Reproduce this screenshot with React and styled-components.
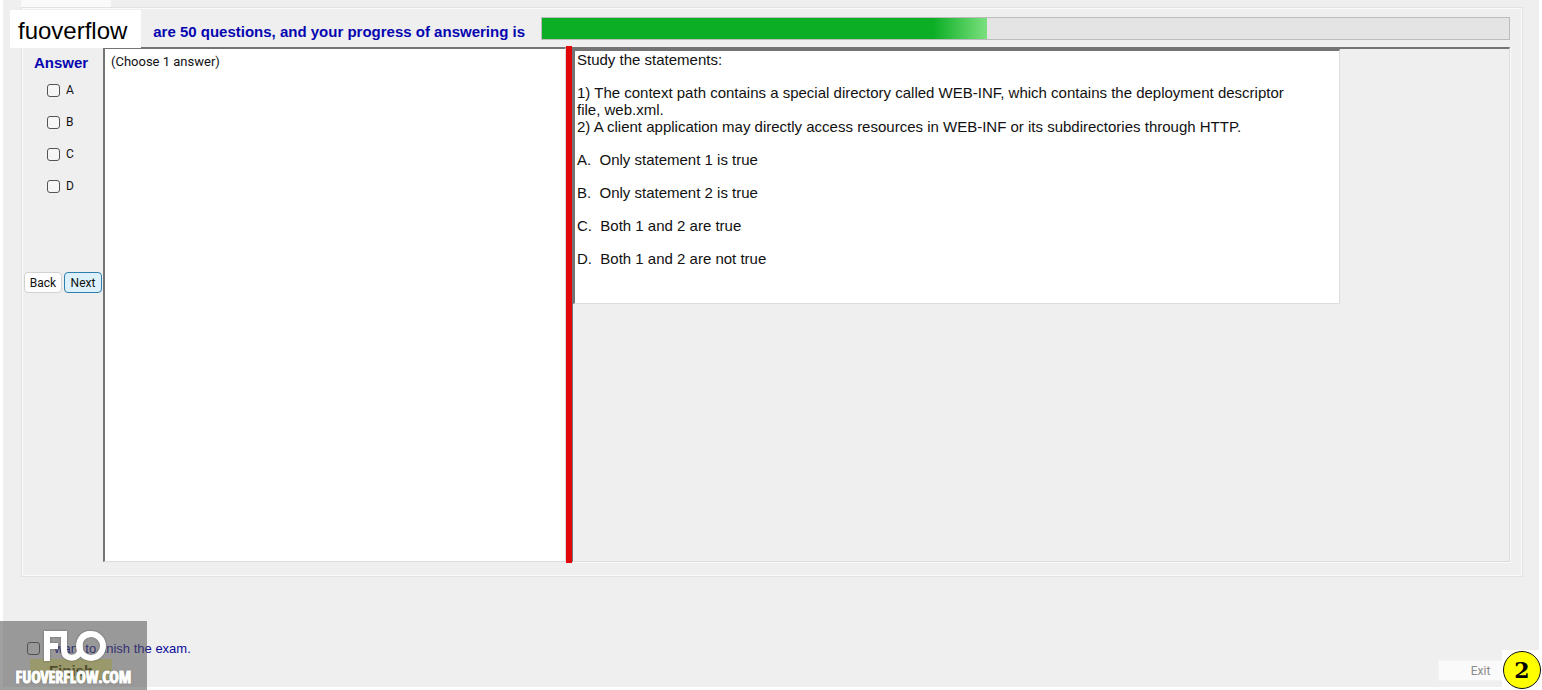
import React, { useState } from 'react';
import styled, { createGlobalStyle } from 'styled-components';

const GlobalStyle = createGlobalStyle`
  * {
    box-sizing: border-box;
  }
  body {
    margin: 0;
    background: #fff;
    color: #111;
    font-family: Roboto, "Liberation Sans", sans-serif;
    font-size: 12px;
  }
`;

const Page = styled.div`
  position: relative;
  min-height: 100vh;
  padding: 0 3px 3px;
  display: flex;
  flex-direction: column;
  overflow: hidden;
`;

const Window = styled.main`
  flex: 1;
  display: flex;
  flex-direction: column;
  padding: 0 16px 0 18px;
  background: #efefef;
`;

const TabStub = styled.div`
  width: 90px;
  height: 7px;
  background: #fafafa;
`;

const ExamGroup = styled.section`
  flex: 1;
  display: flex;
  flex-direction: column;
  padding: 9px 12px 14px 0;
  border: 1px solid #e2e2e2;
  outline: 1px solid #fafafa;
  outline-offset: -2px;
`;

const ProgressRow = styled.div`
  display: flex;
  height: 30px;
  gap: 16px;
`;

const ProgressLabel = styled.label`
  width: 503px;
  color: #0606b0;
  font-family: "Liberation Sans", Arial, sans-serif;
  font-size: 15px;
  font-weight: bold;
  line-height: 30px;
  text-align: right;
  white-space: nowrap;
`;

const ProgressBar = styled.div`
  flex: 1;
  height: 23px;
  background: #e4e4e4;
  border: 1px solid #bcbcbc;
`;

const ProgressFill = styled.div`
  height: 100%;
  background: linear-gradient(to right, #0bae25 calc(100% - 54px), #7be07e);
`;

const Body = styled.div`
  flex: 1;
  display: flex;
`;

const AnswerColumn = styled.fieldset`
  width: 81px;
  margin: 0;
  padding: 8px 0 0;
  border: 0;
  display: flex;
  flex-direction: column;
`;

const AnswerTitle = styled.div`
  margin-bottom: 11px;
  padding-left: 12px;
  color: #0606b0;
  font-family: "Liberation Sans", Arial, sans-serif;
  font-size: 15px;
  font-weight: bold;
  line-height: 16px;
`;

const Tick = styled.input`
  appearance: none;
  flex: none;
  width: 13px;
  height: 13px;
  margin: 0;
  border: 1px solid #555;
  border-radius: 3px;
  background: ${(props) => (props.$clear ? 'transparent' : '#f6f6f6')};

  &:checked {
    background: #0067c0;
  }
`;

const Option = styled.label`
  display: flex;
  align-items: center;
  gap: 6px;
  height: 16px;
  margin-bottom: 16px;
  padding-left: 25px;
`;

const NavButtons = styled.div`
  display: flex;
  gap: 2px;
  margin-top: 62px;
  padding-left: 2px;
`;

const NavButton = styled.button`
  width: 38px;
  height: 21px;
  padding: 0;
  border: 1px solid ${(props) => (props.$focused ? '#2f7fae' : '#d2d2d2')};
  border-radius: 4px;
  background: ${(props) => (props.$focused ? '#dcf1fc' : '#fdfdfd')};
  color: #111;
  font: 12px Roboto, "Liberation Sans", sans-serif;
`;

const HintPane = styled.div`
  width: 463px;
  padding: 4px 6px;
  border: 1px solid #dcdcdc;
  border-top: 2px solid #747474;
  border-left: 2px solid #747474;
  background: #fff;
  font-size: 13px;
  line-height: 18px;
`;

const Splitter = styled.div`
  width: 6px;
  margin: -1px 0;
  background: #e00808;
`;

const QuestionPane = styled.div`
  flex: 1;
  border: 1px solid #dcdcdc;
  border-top: 2px solid #747474;
  border-left: 1px solid #747474;
  box-shadow: 1px 1px 0 #fafafa;
`;

const QuestionText = styled.article`
  display: flex;
  flex-direction: column;
  gap: 16px;
  max-width: 767px;
  min-height: 255px;
  padding: 0 40px 0 2px;
  border: 1px solid #dcdcdc;
  border-top: 2px solid #747474;
  border-left: 2px solid #747474;
  background: #fff;
  font-family: "Liberation Sans", Arial, sans-serif;
  font-size: 15px;
  line-height: 17px;

  p {
    margin: 0;
    white-space: pre-wrap;
  }
`;

const Footer = styled.footer`
  display: flex;
  justify-content: space-between;
  align-items: flex-end;
  height: 110px;
  padding: 0 0 6px 6px;
`;

const FinishArea = styled.div`
  display: flex;
  flex-direction: column;
  gap: 2px;
`;

const FinishLabel = styled.label`
  display: flex;
  align-items: center;
  gap: 7px;
  height: 18px;
  color: #0b0b9a;
  font-family: "Liberation Sans", Arial, sans-serif;
  font-size: 13px;
`;

const FinishButton = styled.button`
  width: 82px;
  height: 22px;
  margin-left: 3px;
  padding: 0;
  border: 0;
  background: #f2f08c;
  color: #4f4a00;
  font: bold 15px "Liberation Sans", Arial, sans-serif;
`;

const ExitButton = styled.button`
  width: 85px;
  height: 21px;
  padding: 0;
  border: 1px solid #f4f4f4;
  background: #fafafa;
  color: #8c8c8c;
  font: 12px Roboto, "Liberation Sans", sans-serif;
`;

/* Overlays */
const NameTag = styled.div`
  position: absolute;
  top: 10px;
  left: 10px;
  width: 131px;
  height: 38px;
  padding-left: 8px;
  background: #fff;
  color: #000;
  font-family: "Liberation Sans", Arial, sans-serif;
  font-size: 24px;
  line-height: 42px;
`;

const Watermark = styled.div`
  position: absolute;
  left: 0;
  bottom: 0;
  width: 147px;
  height: 69px;
  background: rgba(80, 80, 80, 0.54);
  color: #fff;
  pointer-events: none;
`;

const LogoMark = styled.svg`
  display: block;
  width: 147px;
  height: 45px;
  filter: drop-shadow(0 0 1px rgba(60, 60, 60, 0.5));
`;

const SiteName = styled.div`
  font-family: "Liberation Sans Narrow", "Open Sans Condensed", "Liberation Sans", sans-serif;
  font-size: 16px;
  font-weight: bold;
  line-height: 22px;
  text-align: center;
  text-shadow: 0 0 2px #444;
  -webkit-text-stroke: 1px #fff;
`;

const PageBadge = styled.div`
  position: absolute;
  right: 0;
  bottom: 0;
  width: 40px;
  height: 40px;
  background: #fff;
`;

const PageNumber = styled.div`
  width: 38px;
  height: 38px;
  margin: 1px;
  border: 1px solid #111;
  border-radius: 50%;
  background: #ff0;
  color: #000;
  font: bold 22px/36px "DejaVu Serif", serif;
  text-align: center;
`;

const OPTIONS = ['A', 'B', 'C', 'D'];

const QUESTION = [
  'Study the statements:',
  '1) The context path contains a special directory called WEB-INF, which contains the deployment descriptor file, web.xml.\n2) A client application may directly access resources in WEB-INF or its subdirectories through HTTP.',
  'A.  Only statement 1 is true',
  'B.  Only statement 2 is true',
  'C.  Both 1 and 2 are true',
  'D.  Both 1 and 2 are not true',
];

const PROGRESS = 46;

const App = () => {
  const [chosen, setChosen] = useState([]);

  const toggle = (option) =>
    setChosen((prev) =>
      prev.includes(option) ? prev.filter((o) => o !== option) : [...prev, option]
    );

  return (
    <Page>
      <GlobalStyle />
      <Window>
        <TabStub />
        <ExamGroup>
          <ProgressRow>
            <ProgressLabel id="progress-label">
              are 50 questions, and your progress of answering is
            </ProgressLabel>
            <ProgressBar role="progressbar" aria-labelledby="progress-label" aria-valuenow={PROGRESS}>
              <ProgressFill style={{ width: `${PROGRESS}%` }} />
            </ProgressBar>
          </ProgressRow>

          <Body>
            <AnswerColumn aria-labelledby="answer-title">
              <AnswerTitle id="answer-title">Answer</AnswerTitle>
              {OPTIONS.map((option) => (
                <Option key={option}>
                  <Tick
                    type="checkbox"
                    checked={chosen.includes(option)}
                    onChange={() => toggle(option)}
                  />
                  {option}
                </Option>
              ))}
              <NavButtons>
                <NavButton type="button">Back</NavButton>
                <NavButton type="button" $focused>Next</NavButton>
              </NavButtons>
            </AnswerColumn>
            <HintPane>(Choose 1 answer)</HintPane>
            <Splitter />
            <QuestionPane>
              <QuestionText>
                {QUESTION.map((text) => (
                  <p key={text}>{text}</p>
                ))}
              </QuestionText>
            </QuestionPane>
          </Body>
        </ExamGroup>

        <Footer>
          <FinishArea>
            <FinishLabel>
              <Tick type="checkbox" $clear />
              I want to finish the exam.
            </FinishLabel>
            <FinishButton type="button">Finish</FinishButton>
          </FinishArea>
          <ExitButton type="button" disabled>Exit</ExitButton>
        </Footer>
      </Window>

      <NameTag>fuoverflow</NameTag>
      <Watermark>
        <LogoMark viewBox="0 0 147 45" fill="none" stroke="#fff" strokeWidth="6" aria-hidden="true">
          <path d="M47 40V13H61M47 25H58" />
          <path d="M64 10V29C64 40 80 39 80 28C79 20 81 13 91 13" />
          <circle cx="91" cy="25" r="12" />
        </LogoMark>
        <SiteName>FUOVERFLOW.COM</SiteName>
      </Watermark>
      <PageBadge>
        <PageNumber>2</PageNumber>
      </PageBadge>
    </Page>
  );
};

export default App;
